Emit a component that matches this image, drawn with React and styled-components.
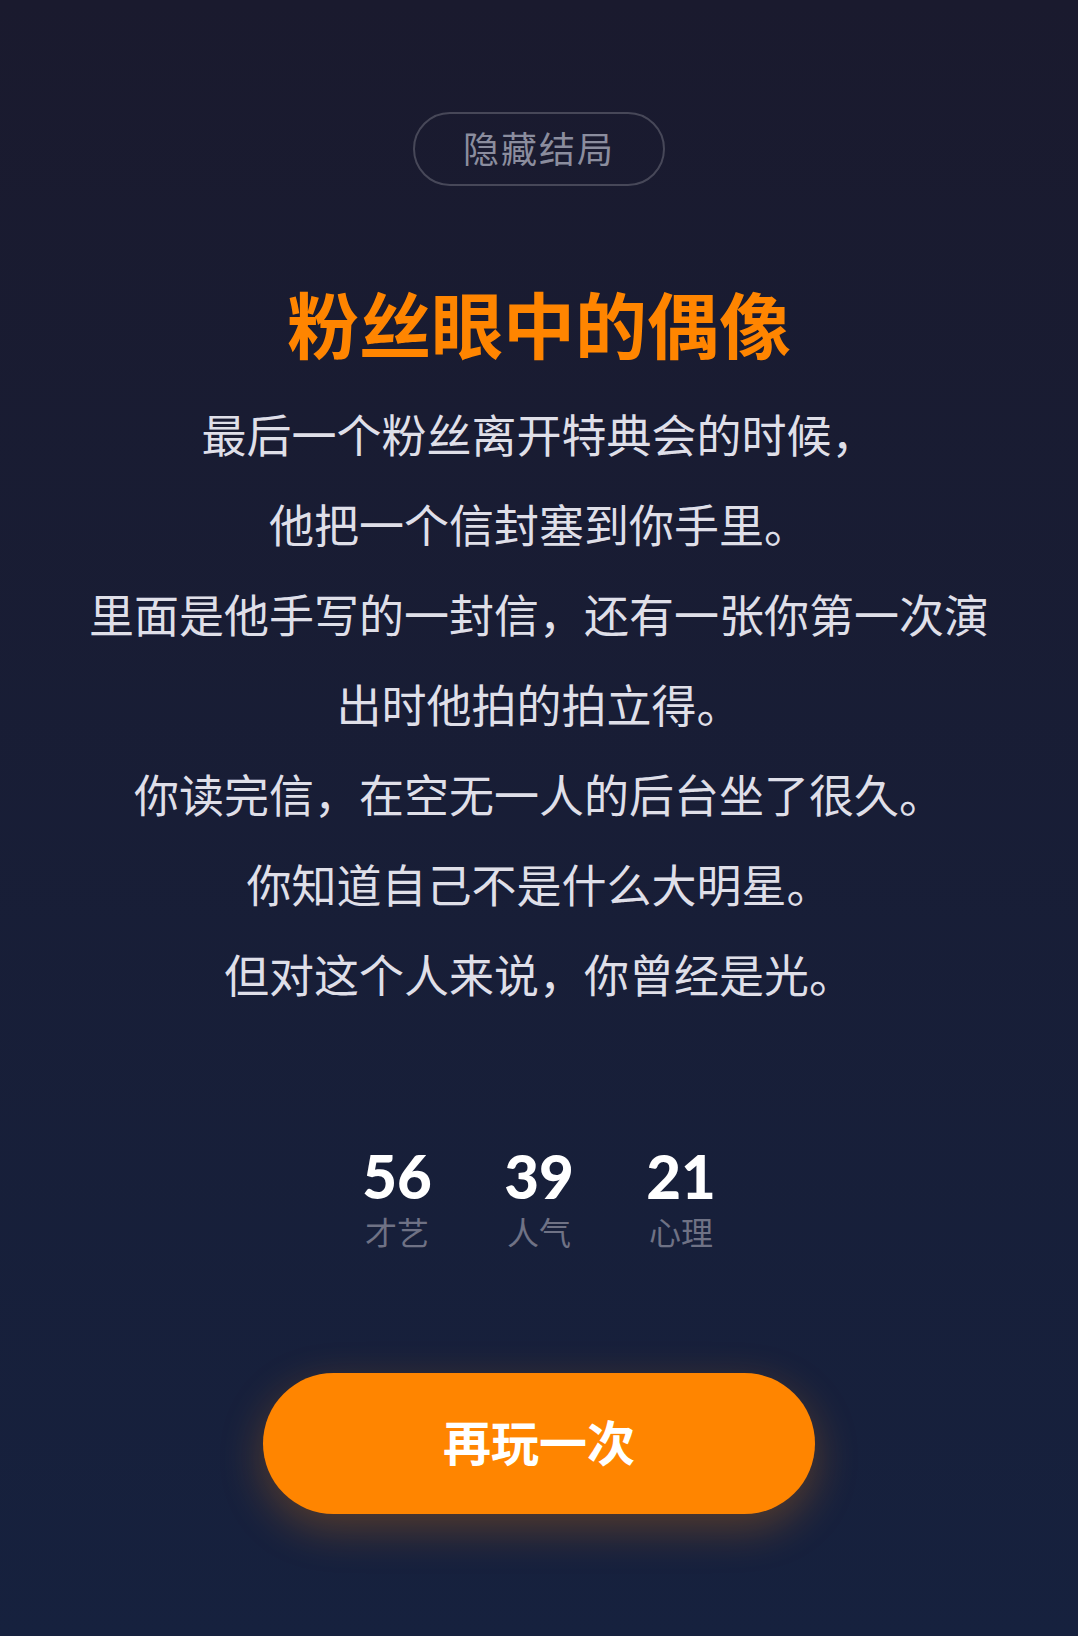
import React from "react";
import styled, { createGlobalStyle } from "styled-components";

const GlobalStyle = createGlobalStyle`
  html, body {
    margin: 0;
    padding: 0;
  }
  body {
    background: linear-gradient(180deg, #1a1a2e 0%, #16213e 100%);
    min-height: 100vh;
    font-family: "Noto Sans CJK SC", "Noto Sans", sans-serif;
  }
  #root {
    min-height: 100vh;
  }
`;

const Page = styled.main`
  min-height: 100vh;
  box-sizing: border-box;
  padding: 112px 40px 80px;
  display: flex;
  flex-direction: column;
  align-items: center;
`;

const Tag = styled.div`
  box-sizing: border-box;
  height: 74px;
  padding: 0 48px 5px;
  border: 2px solid rgba(255, 255, 255, 0.2);
  border-radius: 37px;
  display: flex;
  align-items: center;
  justify-content: center;
  font-size: 36px;
  line-height: 1;
  letter-spacing: 2px;
  color: #8b8d9e;
`;

const Title = styled.h1`
  margin: 86px 0 0;
  font-size: 72px;
  line-height: 100px;
  font-weight: 700;
  color: #ff8500;
  text-align: center;
`;

const Story = styled.div`
  margin-top: 17px;
  max-width: 904px;
  text-align: center;
  font-size: 45px;
  line-height: 90px;
  color: #dfdfe8;
`;

const Line = styled.p`
  margin: 0;
`;

const Stats = styled.div`
  margin-top: 125px;
  display: flex;
  gap: 42px;
`;

const Stat = styled.div`
  width: 100px;
  display: flex;
  flex-direction: column;
  align-items: center;
`;

const StatValue = styled.div`
  font-family: "Lato", "Noto Sans", sans-serif;
  font-weight: 900;
  font-size: 60px;
  line-height: 64px;
  color: #ffffff;
`;

const StatLabel = styled.div`
  font-size: 32px;
  line-height: 46px;
  color: #6f7285;
`;

const ReplayButton = styled.button`
  margin-top: 119px;
  width: 552px;
  height: 141px;
  padding: 0 0 8px;
  border: none;
  border-radius: 71px;
  background: #ff8500;
  color: #ffffff;
  font-family: "Noto Sans CJK SC", "Noto Sans", sans-serif;
  font-size: 48px;
  line-height: 1;
  font-weight: 700;
  box-shadow: 0 14px 44px rgba(255, 133, 0, 0.28);
  cursor: pointer;
`;

const lines = [
  "最后一个粉丝离开特典会的时候，",
  "他把一个信封塞到你手里。",
  "里面是他手写的一封信，还有一张你第一次演出时他拍的拍立得。",
  "你读完信，在空无一人的后台坐了很久。",
  "你知道自己不是什么大明星。",
  "但对这个人来说，你曾经是光。",
];

const stats = [
  { value: 56, label: "才艺" },
  { value: 39, label: "人气" },
  { value: 21, label: "心理" },
];

export default function App() {
  return (
    <>
      <GlobalStyle />
      <Page>
        <Tag>隐藏结局</Tag>
        <Title>粉丝眼中的偶像</Title>
        <Story>
          {lines.map((l) => (
            <Line key={l}>{l}</Line>
          ))}
        </Story>
        <Stats>
          {stats.map((s) => (
            <Stat key={s.label}>
              <StatValue>{s.value}</StatValue>
              <StatLabel>{s.label}</StatLabel>
            </Stat>
          ))}
        </Stats>
        <ReplayButton>再玩一次</ReplayButton>
      </Page>
    </>
  );
}
